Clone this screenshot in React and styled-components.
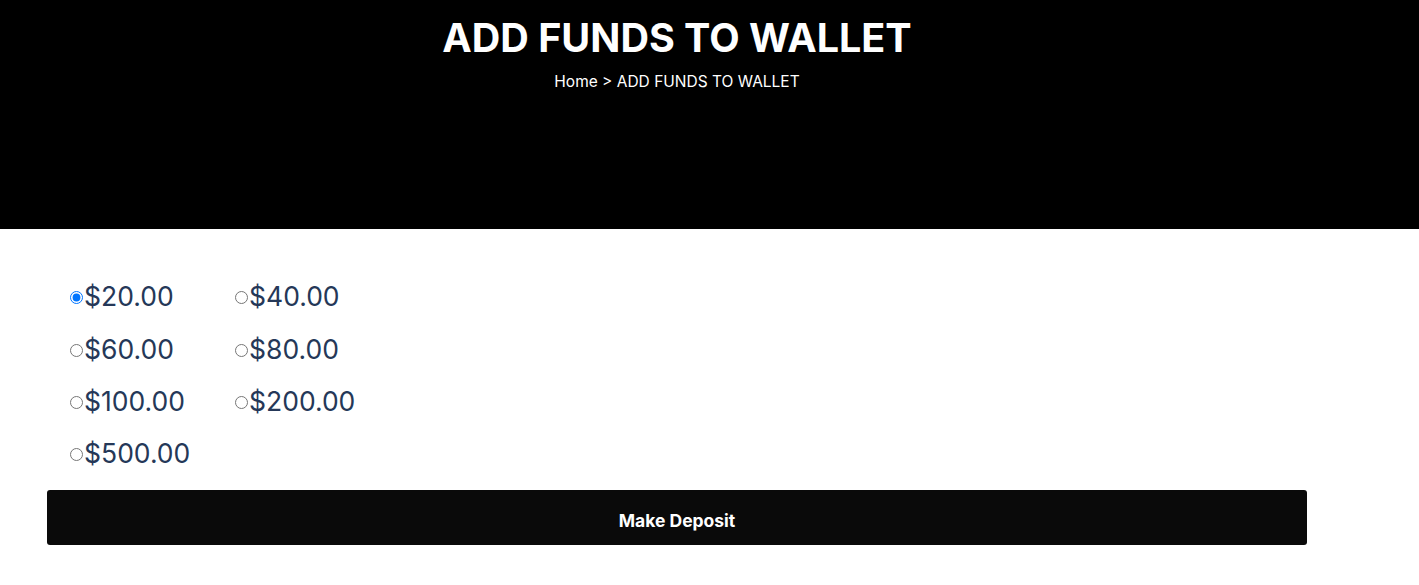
import React, { useState } from 'react';
import styled, { createGlobalStyle } from 'styled-components';

const GlobalStyle = createGlobalStyle`
  body {
    margin: 0;
    font-family: Inter, "Noto Sans", sans-serif;
    background: #fff;
  }
`;

const Hero = styled.header`
  background: #000;
  height: 229px;
  display: flex;
  flex-direction: column;
  align-items: center;
  padding-top: 14px;
  box-sizing: border-box;
  padding-right: 65px;
`;

const Title = styled.h1`
  margin: 0;
  color: #fff;
  font-size: 39.5px;
  font-weight: 700;
  line-height: 48px;
`;

const Crumbs = styled.div`
  margin-top: 10px;
  color: #fff;
  font-size: 15.5px;
  line-height: 20px;
`;

const Main = styled.main`
  padding: 41px 112px 0 47px;
`;

const Options = styled.div`
  display: grid;
  grid-template-columns: 165px 165px;
  grid-auto-rows: 52.4px;
  padding-left: 23px;
`;

const Option = styled.label`
  display: flex;
  align-items: center;
  color: #253858;
  font-size: 26.5px;
  cursor: pointer;
`;

const Radio = styled.input`
  margin: 3px 1px 0 0;
  width: 13px;
  height: 13px;
`;

const Button = styled.button`
  display: block;
  width: 100%;
  height: 55px;
  margin-top: 10px;
  padding: 6px 0 0;
  border: none;
  border-radius: 3px;
  background: #0a0a0a;
  color: #fff;
  font-family: Inter, "Noto Sans", sans-serif;
  font-size: 17.5px;
  font-weight: 700;
  cursor: pointer;
`;

const amounts = ['20.00', '40.00', '60.00', '80.00', '100.00', '200.00', '500.00'];

const App = () => {
  const [amount, setAmount] = useState('20.00');

  return (
    <>
      <GlobalStyle />
      <Hero>
        <Title>ADD FUNDS TO WALLET</Title>
        <Crumbs>Home &gt; ADD FUNDS TO WALLET</Crumbs>
      </Hero>
      <Main>
        <Options>
          {amounts.map((a) => (
            <Option key={a}>
              <Radio
                type="radio"
                name="amount"
                checked={amount === a}
                onChange={() => setAmount(a)}
              />
              ${a}
            </Option>
          ))}
        </Options>
        <Button>Make Deposit</Button>
      </Main>
    </>
  );
};

export default App;
